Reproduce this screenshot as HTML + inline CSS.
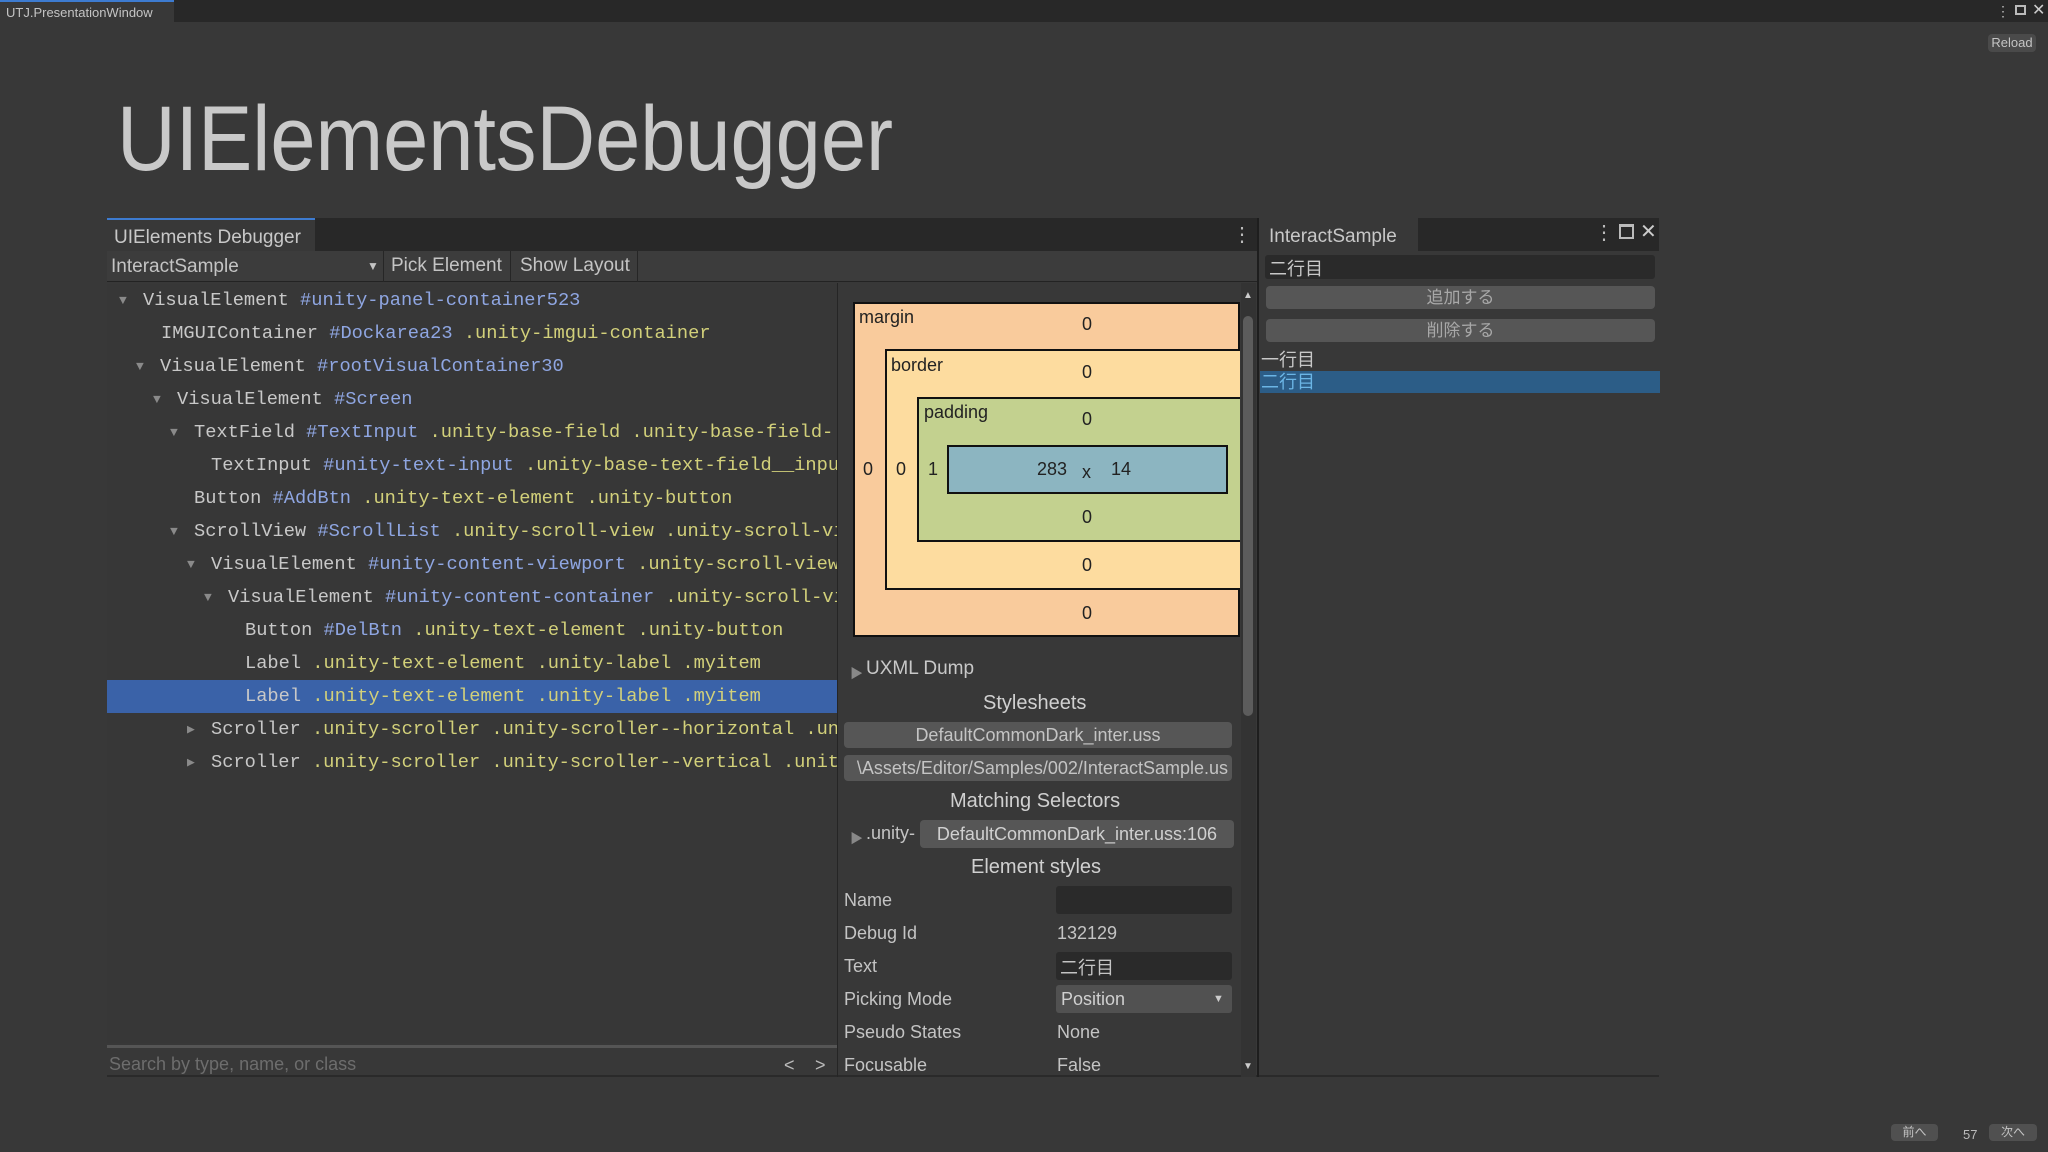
<!DOCTYPE html>
<html><head><meta charset="utf-8">
<style>
*{margin:0;padding:0;box-sizing:border-box}
body{width:2048px;height:1152px;background:#383838;position:relative;overflow:hidden;font-family:"Liberation Sans","Noto Sans CJK JP",sans-serif;color:#c4c4c4}
.a{position:absolute}
.mono{font-family:"Liberation Mono",monospace;font-size:18.7px;white-space:nowrap;letter-spacing:0px}
.t{color:#c8c8c8}.i{color:#8fa6e2}.c{color:#d2d07a}
.row{position:absolute;left:0;height:33px;line-height:33px;width:730px}
.arr{position:absolute;color:#8a8a8a;font-size:13px}
.bm{font-size:18px;color:#222;position:absolute}
.lbl{position:absolute;left:844px;font-size:18px;color:#c4c4c4}
.val{position:absolute;left:1057px;font-size:18px;color:#c4c4c4}
.btn{position:absolute;background:#565656;border-radius:4px;color:#c4c4c4;font-size:18px;text-align:center}
</style></head><body>
<div class="a" style="left:0;top:0;width:2048px;height:22px;background:#282828"></div>
<div class="a" style="left:0;top:0;width:174px;height:22px;background:#383838;border-top:2px solid #3d7bd0;font-size:13px;color:#c4c4c4;padding:3px 0 0 6px">UTJ.PresentationWindow</div>
<div class="a" style="left:1996px;top:3px;font-size:14px;color:#bbb">⋮</div>
<div class="a" style="left:2015px;top:5px;width:11px;height:10px;border:2px solid #bbb"></div>
<div class="a" style="left:2032px;top:0px;font-size:16px;color:#ccc">✕</div>
<div class="btn" style="left:1988px;top:34px;width:48px;height:18px;font-size:13px;line-height:18px;background:#4a4a4a">Reload</div>
<svg class="a" style="left:0;top:0" width="1000" height="220"><text x="117" y="170" font-family="Liberation Sans" font-size="92" fill="#c9c9c9" textLength="776" lengthAdjust="spacingAndGlyphs">UIElementsDebugger</text></svg>

<div class="a" style="left:107px;top:218px;width:1150px;height:859px;background:#383838;border-bottom:2px solid #2a2a2a"></div>
<div class="a" style="left:107px;top:218px;width:1150px;height:33px;background:#282828"></div>
<div class="a" style="left:107px;top:218px;width:208px;height:33px;background:#383838;border-top:2px solid #3d7bd0;font-size:19px;color:#c8c8c8;padding:7px 0 0 7px">UIElements Debugger</div>
<div class="a" style="left:1232px;top:222px;font-size:20px;color:#bbb">⋮</div>
<div class="a" style="left:107px;top:251px;width:1150px;height:31px;background:#3c3c3c;border-bottom:1px solid #232323"></div>
<div class="a" style="left:111px;top:256px;font-size:19px;color:#c4c4c4">InteractSample</div>
<div class="a" style="left:367px;top:259px;font-size:12px;color:#c4c4c4">▼</div>
<div class="a" style="left:383px;top:251px;width:1px;height:31px;background:#262626"></div>
<div class="a" style="left:391px;top:255px;font-size:19px;color:#c4c4c4">Pick Element</div>
<div class="a" style="left:510px;top:251px;width:1px;height:31px;background:#262626"></div>
<div class="a" style="left:520px;top:255px;font-size:19px;color:#c4c4c4">Show Layout</div>
<div class="a" style="left:637px;top:251px;width:1px;height:31px;background:#262626"></div>

<div class="a mono" style="left:107px;top:284px;width:730px;height:759px;overflow:hidden;background:#373737">
<div class="row" style="top:0"><span class="arr" style="left:12px">▼</span><span class="a" style="left:36px"><span class="t">VisualElement</span> <span class="i">#unity-panel-container523</span></span></div>
<div class="row" style="top:33px"><span class="a" style="left:54px"><span class="t">IMGUIContainer</span> <span class="i">#Dockarea23</span> <span class="c">.unity-imgui-container</span></span></div>
<div class="row" style="top:66px"><span class="arr" style="left:29px">▼</span><span class="a" style="left:53px"><span class="t">VisualElement</span> <span class="i">#rootVisualContainer30</span></span></div>
<div class="row" style="top:99px"><span class="arr" style="left:46px">▼</span><span class="a" style="left:70px"><span class="t">VisualElement</span> <span class="i">#Screen</span></span></div>
<div class="row" style="top:132px"><span class="arr" style="left:63px">▼</span><span class="a" style="left:87px"><span class="t">TextField</span> <span class="i">#TextInput</span> <span class="c">.unity-base-field .unity-base-field-</span></span></div>
<div class="row" style="top:165px"><span class="a" style="left:104px"><span class="t">TextInput</span> <span class="i">#unity-text-input</span> <span class="c">.unity-base-text-field__input</span></span></div>
<div class="row" style="top:198px"><span class="a" style="left:87px"><span class="t">Button</span> <span class="i">#AddBtn</span> <span class="c">.unity-text-element .unity-button</span></span></div>
<div class="row" style="top:231px"><span class="arr" style="left:63px">▼</span><span class="a" style="left:87px"><span class="t">ScrollView</span> <span class="i">#ScrollList</span> <span class="c">.unity-scroll-view .unity-scroll-view</span></span></div>
<div class="row" style="top:264px"><span class="arr" style="left:80px">▼</span><span class="a" style="left:104px"><span class="t">VisualElement</span> <span class="i">#unity-content-viewport</span> <span class="c">.unity-scroll-view</span></span></div>
<div class="row" style="top:297px"><span class="arr" style="left:97px">▼</span><span class="a" style="left:121px"><span class="t">VisualElement</span> <span class="i">#unity-content-container</span> <span class="c">.unity-scroll-view</span></span></div>
<div class="row" style="top:330px"><span class="a" style="left:138px"><span class="t">Button</span> <span class="i">#DelBtn</span> <span class="c">.unity-text-element .unity-button</span></span></div>
<div class="row" style="top:363px"><span class="a" style="left:138px"><span class="t">Label</span> <span class="c">.unity-text-element .unity-label .myitem</span></span></div>
<div class="row" style="top:396px;background:#3a62a8"><span class="a" style="left:138px"><span class="t">Label</span> <span class="c">.unity-text-element .unity-label .myitem</span></span></div>
<div class="row" style="top:429px"><span class="arr" style="left:80px">▶</span><span class="a" style="left:104px"><span class="t">Scroller</span> <span class="c">.unity-scroller .unity-scroller--horizontal .unity</span></span></div>
<div class="row" style="top:462px"><span class="arr" style="left:80px">▶</span><span class="a" style="left:104px"><span class="t">Scroller</span> <span class="c">.unity-scroller .unity-scroller--vertical .unity</span></span></div>
</div>
<div class="a" style="left:107px;top:1045px;width:730px;height:3px;background:#555"></div>
<div class="a" style="left:109px;top:1054px;font-size:18px;color:#6d6d6d">Search by type, name, or class</div>
<div class="a" style="left:784px;top:1055px;font-size:18px;color:#bbb">&lt;</div>
<div class="a" style="left:815px;top:1055px;font-size:18px;color:#bbb">&gt;</div>
<div class="a" style="left:837px;top:283px;width:1px;height:794px;background:#252525"></div>

<div class="a" style="left:1241px;top:283px;width:15px;height:794px;background:#333"></div>
<div class="a" style="left:1243px;top:316px;width:10px;height:400px;background:#5c5c5c;border-radius:5px"></div>
<div class="a" style="left:1243px;top:290px;font-size:10px;color:#ccc">▲</div>
<div class="a" style="left:1243px;top:1061px;font-size:10px;color:#ccc">▼</div>

<div class="a" style="left:853px;top:302px;width:387px;height:335px;background:#f9cb9c;border:2px solid #111"></div>
<div class="a" style="left:885px;top:349px;width:355px;height:241px;background:#fddc9f;border:2px solid #111;border-right:none"></div>
<div class="a" style="left:917px;top:397px;width:323px;height:145px;background:#c3d18f;border:2px solid #111;border-right:none"></div>
<div class="a" style="left:947px;top:445px;width:281px;height:49px;background:#8cb5c1;border:2px solid #111"></div>
<div class="bm" style="left:859px;top:307px">margin</div>
<div class="bm" style="left:891px;top:355px">border</div>
<div class="bm" style="left:924px;top:402px">padding</div>
<div class="bm" style="left:1082px;top:314px">0</div>
<div class="bm" style="left:1082px;top:362px">0</div>
<div class="bm" style="left:1082px;top:409px">0</div>
<div class="bm" style="left:1082px;top:507px">0</div>
<div class="bm" style="left:1082px;top:555px">0</div>
<div class="bm" style="left:1082px;top:603px">0</div>
<div class="bm" style="left:863px;top:459px">0</div>
<div class="bm" style="left:896px;top:459px">0</div>
<div class="bm" style="left:928px;top:459px">1</div>
<div class="bm" style="left:1037px;top:459px">283</div>
<div class="bm" style="left:1082px;top:462px">x</div>
<div class="bm" style="left:1111px;top:459px">14</div>

<div class="a" style="left:850px;top:663px;font-size:13px;color:#888">▶</div>
<div class="a" style="left:866px;top:658px;font-size:19px;color:#c8c8c8">UXML Dump</div>
<div class="a" style="left:983px;top:692px;font-size:20px;color:#d0d0d0">Stylesheets</div>
<div class="btn" style="left:844px;top:722px;width:388px;height:26px;line-height:26px">DefaultCommonDark_inter.uss</div>
<div class="btn" style="left:844px;top:755px;width:388px;height:26px;line-height:26px;overflow:hidden;white-space:nowrap;display:flex;justify-content:flex-end;padding-right:4px"><span>\Assets/Editor/Samples/002/InteractSample.us</span></div>
<div class="a" style="left:950px;top:790px;font-size:20px;color:#d0d0d0">Matching Selectors</div>
<div class="a" style="left:850px;top:828px;font-size:13px;color:#888">▶</div>
<div class="a" style="left:866px;top:823px;font-size:18px;color:#c4c4c4">.unity-</div>
<div class="btn" style="left:920px;top:820px;width:314px;height:28px;line-height:28px;color:#d0d0d0">DefaultCommonDark_inter.uss:106</div>
<div class="a" style="left:971px;top:856px;font-size:20px;color:#d0d0d0">Element styles</div>
<div class="lbl" style="top:890px">Name</div>
<div class="a" style="left:1056px;top:886px;width:176px;height:28px;background:#2a2a2a;border-radius:3px"></div>
<div class="lbl" style="top:923px">Debug Id</div><div class="val" style="top:923px">132129</div>
<div class="lbl" style="top:956px">Text</div>
<div class="a" style="left:1056px;top:952px;width:176px;height:28px;background:#2a2a2a;border-radius:3px"></div>
<div class="val" style="top:954px;left:1060px">二行目</div>
<div class="lbl" style="top:989px">Picking Mode</div>
<div class="a" style="left:1056px;top:985px;width:176px;height:28px;background:#515151;border-radius:3px"></div>
<div class="val" style="top:989px;left:1061px;color:#d0d0d0">Position</div>
<div class="a" style="left:1213px;top:993px;font-size:11px;color:#ccc">▼</div>
<div class="lbl" style="top:1022px">Pseudo States</div><div class="val" style="top:1022px">None</div>
<div class="lbl" style="top:1055px">Focusable</div><div class="val" style="top:1055px">False</div>

<div class="a" style="left:1257px;top:218px;width:2px;height:859px;background:#1e1e1e"></div>
<div class="a" style="left:1259px;top:218px;width:400px;height:859px;background:#383838;border-bottom:2px solid #2a2a2a"></div>
<div class="a" style="left:1259px;top:218px;width:400px;height:33px;background:#282828"></div>
<div class="a" style="left:1259px;top:218px;width:159px;height:33px;background:#383838;font-size:19px;color:#c8c8c8;padding:8px 0 0 10px">InteractSample</div>
<div class="a" style="left:1594px;top:220px;font-size:20px;color:#bbb">⋮</div>
<div class="a" style="left:1619px;top:224px;width:15px;height:15px;border:2px solid #bbb;border-top-width:3px"></div>
<div class="a" style="left:1640px;top:219px;font-size:20px;color:#ccc">✕</div>
<div class="a" style="left:1265px;top:255px;width:390px;height:24px;background:#2a2a2a;border-radius:3px;font-size:18px;color:#c8c8c8;padding:0 0 0 4px">二行目</div>
<div class="btn" style="left:1266px;top:286px;width:389px;height:23px;line-height:23px;font-size:17px;color:#a8a8a8">追加する</div>
<div class="btn" style="left:1266px;top:319px;width:389px;height:23px;line-height:23px;font-size:17px;color:#a8a8a8">削除する</div>
<div class="a" style="left:1261px;top:346px;font-size:18px;color:#c8c8c8">一行目</div>
<div class="a" style="left:1260px;top:371px;width:400px;height:22px;background:#2c5d87"></div>
<div class="a" style="left:1261px;top:368px;font-size:18px;color:#6bb5e5">二行目</div>

<div class="btn" style="left:1891px;top:1124px;width:47px;height:17px;line-height:17px;font-size:12px;background:#505050">前へ</div>
<div class="a" style="left:1963px;top:1127px;font-size:13px;color:#bbb">57</div>
<div class="btn" style="left:1989px;top:1124px;width:48px;height:17px;line-height:17px;font-size:12px;background:#505050">次へ</div>
</body></html>
